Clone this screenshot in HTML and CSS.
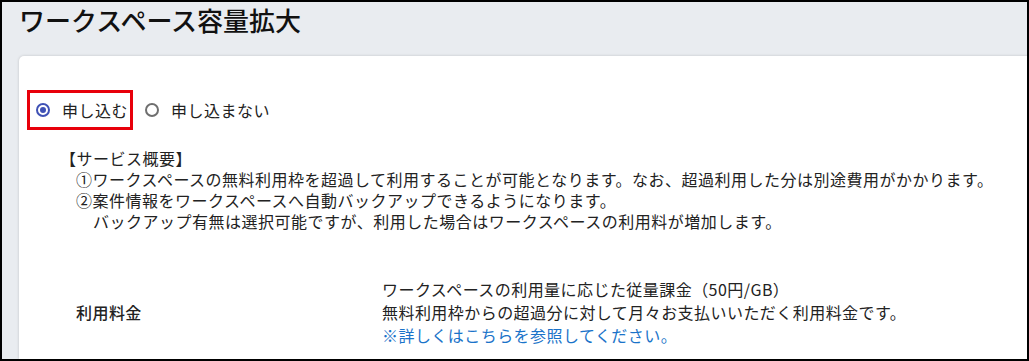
FILE: index.html
```html
<!DOCTYPE html>
<html lang="ja">
<head>
  <meta charset="UTF-8" />
  <title>ワークスペース容量拡大</title>
  <link rel="stylesheet" href="styles.css">
</head>
<body>

  <div class="frame">
    <div class="header">
      <h1 class="title">ワークスペース容量拡大</h1>
    </div>

    <div class="card">
      <div class="options">
        <label class="option selected">
          <span class="radio checked"></span>
          <span class="option-text">申し込む</span>
        </label>
        <label class="option">
          <span class="radio"></span>
          <span class="option-text">申し込まない</span>
        </label>
      </div>

      <div class="summary">
        <div class="summary-title">【サービス概要】</div>
        <div class="summary-item">①ワークスペースの無料利用枠を超過して利用することが可能となります。なお、超過利用した分は別途費用がかかります。</div>
        <div class="summary-item">②案件情報をワークスペースへ自動バックアップできるようになります。</div>
        <div class="summary-note">バックアップ有無は選択可能ですが、利用した場合はワークスペースの利用料が増加します。</div>
      </div>

      <div class="fee">
        <div class="fee-label">利用料金</div>
        <div class="fee-body">
          <div>ワークスペースの利用量に応じた従量課金（50円/GB）</div>
          <div>無料利用枠からの超過分に対して月々お支払いいただく利用料金です。</div>
          <a class="fee-link" href="#">※詳しくはこちらを参照してください。</a>
        </div>
      </div>
    </div>
  </div>

</body>
</html>
```

FILE: styles.css
```css
body {
  margin: 0;
  font-family: "Noto Sans CJK JP", "Noto Sans", sans-serif;
  color: #222;
}

.frame {
  width: 1029px;
  height: 361px;
  box-sizing: border-box;
  border: 2px solid #000;
  background-color: #e9ecf0;
  overflow: hidden;
  display: flex;
  flex-direction: column;
}

.header {
  height: 54px;
  padding: 0 17px;
  flex-shrink: 0;
}

.title {
  margin: 0;
  font-size: 26px;
  font-weight: 500;
  line-height: 36px;
  color: #111;
}

.card {
  flex: 1;
  margin-left: 17px;
  margin-right: -12px;
  padding: 34px 0 0 8px;
  background: #fff;
  border-radius: 5px 0 0 0;
  box-shadow: 0 0 3px rgba(0, 0, 0, 0.18);
}

.options {
  display: flex;
  align-items: center;
  font-size: 16px;
  letter-spacing: 0.5px;
}

.option {
  display: flex;
  align-items: center;
  gap: 12px;
  height: 34px;
  border: 3px solid transparent;
  padding: 0 2px 0 6px;
}

.option.selected {
  border-color: #e8000b;
}

.option + .option {
  margin-left: 3px;
}

.radio {
  width: 14px;
  height: 14px;
  box-sizing: border-box;
  border: 2px solid #6f6f6f;
  border-radius: 50%;
  display: flex;
  align-items: center;
  justify-content: center;
}

.radio.checked {
  border-color: #3f51b5;
}

.radio.checked::after {
  content: "";
  width: 6px;
  height: 6px;
  border-radius: 50%;
  background: #3f51b5;
}

.summary {
  margin: 18px 0 0 33px;
  font-size: 16px;
  line-height: 21px;
  letter-spacing: 0.5px;
}

.summary-item {
  padding-left: 16px;
}

.summary-note {
  padding-left: 33px;
}

.fee {
  display: grid;
  grid-template-columns: 306px 1fr;
  align-items: center;
  margin: 46px 0 0 49px;
  font-size: 16px;
  line-height: 23px;
  letter-spacing: 0.45px;
}

.fee-label {
  font-weight: 500;
}

.fee-link {
  color: #1a73c9;
  text-decoration: none;
}
```
